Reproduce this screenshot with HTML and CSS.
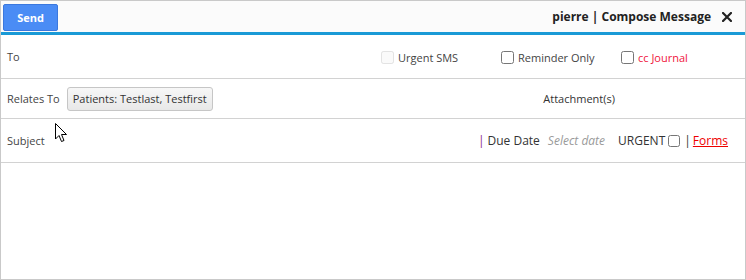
FILE: index.html
```html
<!DOCTYPE html>
<html>
<head>
<meta charset="utf-8">
<link rel="stylesheet" href="styles.css">
</head>
<body>
<div class="win">
  <div class="header">
    <button class="send">Send</button>
    <div class="title">pierre | Compose Message
      <svg class="close" width="10" height="10" viewBox="0 0 10 10"><path d="M1 1 L9 9 M9 1 L1 9" stroke="#222" stroke-width="2.2" stroke-linecap="square"/></svg>
    </div>
  </div>
  <div class="row row-to">
    <span class="label">To</span>
    <div class="opts">
      <label class="opt disabled"><input type="checkbox" disabled> Urgent SMS</label>
      <label class="opt"><input type="checkbox"> Reminder Only</label>
      <label class="opt red"><input type="checkbox"> cc Journal</label>
    </div>
  </div>
  <div class="row row-rel">
    <span class="label">Relates To</span>
    <button class="chip">Patients: Testlast, Testfirst</button>
    <span class="attach">Attachment(s)</span>
  </div>
  <div class="row row-subj">
    <span class="label">Subject</span>
    <div class="subj-right">
      <span class="bar">|</span><span class="due">Due Date</span>
      <span class="date">Select date</span>
      <span class="urgent">URGENT</span><input type="checkbox"><span class="pipe">|</span><a class="forms" href="#">Forms</a>
    </div>
  </div>
  <div class="body"></div>
  <svg class="cursor" width="13" height="20" viewBox="0 0 13 20"><path d="M0.5 0.5 L0.5 16 L4 12.5 L6.5 18.5 L9 17.5 L6.5 11.5 L11.5 11.5 Z" fill="#fff" stroke="#000" stroke-width="1" stroke-linejoin="round"/></svg>
</div>
</body>
</html>
```
FILE: styles.css
```css
html, body { margin: 0; padding: 0; background: #fff; }
body { font-family: "Open Sans", "Noto Sans", sans-serif; font-size: 11px; color: #333; }
.win { position: relative; width: 746px; height: 280px; box-sizing: border-box; border: 1px solid #c9c9c9; display: flex; flex-direction: column; }
.header { height: 31px; background: #fbfbfb; border-bottom: 3px solid #1a9ad6; display: flex; align-items: center; justify-content: space-between; padding: 0 13px 0 2px; }
.send { width: 55px; height: 27px; margin-top: 1px; background: #4a8cf5; border: 1px solid #3b78de; border-radius: 2px; color: #fff; font-family: inherit; font-weight: bold; font-size: 11px; padding: 0; }
.title { font-weight: bold; font-size: 12px; color: #222; display: flex; align-items: center; }
.close { margin-left: 11px; }
.row { display: flex; align-items: center; border-bottom: 1px solid #d2d2d2; padding-left: 6px; }
.row-to { height: 43px; }
.row-rel { height: 39px; }
.row-subj { height: 43px; }
.label { color: #444; }
.opts { margin-left: auto; display: flex; margin-right: 4px; margin-top: 2px; }
.opt { width: 120px; display: flex; align-items: center; gap: 4px; color: #444; }
.opt input { margin: 0; width: 13px; height: 13px; }
.opt.disabled input { opacity: 0.6; }
.opt.red { color: #f0143c; }
.chip { margin-left: 7px; height: 24px; padding: 0 5px; font-family: inherit; font-size: 11px; color: #333; background: linear-gradient(#f7f7f7, #e8e8e8); border: 1px solid #c6c6c6; border-radius: 3px; }
.attach { margin-left: auto; margin-right: 130px; color: #333; }
.subj-right { margin-left: auto; margin-right: 17px; display: flex; align-items: center; color: #333; font-size: 12px; }
.bar { color: #8b2c8b; margin-right: 3px; }
.date { color: #9a9a9a; font-style: italic; margin: 0 13px 0 8px; }
.subj-right input { margin: 0 0 0 3px; width: 12px; height: 12px; }
.pipe { margin: 0 2px 0 4px; }
.forms { color: #e00; }
.body { flex: 1; }
.cursor { position: absolute; left: 54px; top: 122px; }
```
